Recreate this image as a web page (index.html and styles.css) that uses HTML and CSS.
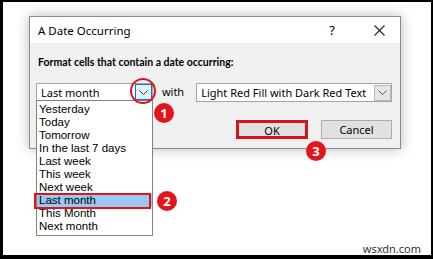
FILE: index.html
```html
<!DOCTYPE html>
<html lang="en">
<head>
    <meta charset="UTF-8">
    <title>A Date Occurring</title>
    <link rel="stylesheet" href="styles.css">
</head>
<body>
    <div class="frame">
        <div class="dialog">
            <div class="titlebar">
                <span class="title">A Date Occurring</span>
                <span class="help">?</span>
                <span class="close">
                    <svg width="11" height="11" viewBox="0 0 11 11"><path d="M0.5 0.5 L10.5 10.5 M10.5 0.5 L0.5 10.5" stroke="#222" stroke-width="1.1" fill="none"/></svg>
                </span>
            </div>
            <div class="body">
                <div class="label">Format cells that contain a date occurring:</div>
                <div class="row">
                    <div class="combo combo-period">
                        <span class="combo-text">Last month</span>
                        <span class="combo-btn active">
                            <svg width="9" height="5" viewBox="0 0 9 5"><path d="M0.5 0.5 L4.5 4.5 L8.5 0.5" stroke="#333" stroke-width="1" fill="none"/></svg>
                        </span>
                        <span class="ring"></span>
                        <span class="badge badge-1">1</span>
                        <ul class="list">
                            <li>Yesterday</li>
                            <li>Today</li>
                            <li>Tomorrow</li>
                            <li>In the last 7 days</li>
                            <li>Last week</li>
                            <li>This week</li>
                            <li>Next week</li>
                            <li class="selected">Last month<span class="badge badge-2">2</span></li>
                            <li>This Month</li>
                            <li>Next month</li>
                        </ul>
                    </div>
                    <span class="with">with</span>
                    <div class="combo combo-format">
                        <span class="combo-text">Light Red Fill with Dark Red Text</span>
                        <span class="combo-btn">
                            <svg width="9" height="5" viewBox="0 0 9 5"><path d="M0.5 0.5 L4.5 4.5 L8.5 0.5" stroke="#555" stroke-width="1" fill="none"/></svg>
                        </span>
                    </div>
                </div>
                <div class="buttons">
                    <button class="btn btn-ok">OK<span class="badge badge-3">3</span></button>
                    <button class="btn">Cancel</button>
                </div>
            </div>
        </div>
        <div class="watermark">wsxdn.com</div>
    </div>
</body>
</html>
```

FILE: styles.css
```css
* {
    margin: 0;
    padding: 0;
    box-sizing: border-box;
}
body {
    font-family: 'Noto Sans', 'Open Sans', sans-serif;
    background: #000;
}
.frame {
    position: relative;
    width: 433px;
    height: 259px;
    background: #fff;
    border-style: solid;
    border-color: #000;
    border-width: 2px 2px 4px 3px;
    overflow: hidden;
}
.dialog {
    margin: 14px 0 0 26px;
    width: 372px;
    height: 133px;
    border: 1px solid #8a8a8a;
    display: flex;
    flex-direction: column;
    box-shadow: 0 0 12px rgba(0, 0, 0, 0.28);
}
.titlebar {
    height: 26px;
    background: #fff;
    display: flex;
    align-items: center;
    padding-left: 8px;
    font-size: 11.5px;
    color: #000;
}
.title {
    flex: 1;
}
.help {
    font-size: 13px;
    margin-right: 39px;
}
.close {
    display: flex;
    margin-right: 15px;
}
.body {
    flex: 1;
    background: #f0f0f0;
    padding: 12px 8px 0 6px;
}
.label {
    font-family: 'Lato', 'Noto Sans', sans-serif;
    font-size: 10.5px;
    font-weight: bold;
    line-height: 14px;
    padding-left: 2px;
}
.row {
    display: flex;
    align-items: flex-start;
    margin-top: 14px;
}
.combo {
    position: relative;
    display: flex;
    align-items: center;
    background: #fff;
    border: 1px solid #a5a5a5;
    font-size: 11px;
}
.combo-period {
    width: 117px;
    height: 18px;
}
.combo-format {
    width: 196px;
    height: 19px;
    margin-left: 12px;
}
.combo-text {
    flex: 1;
    padding-left: 4px;
    white-space: nowrap;
}
.combo-btn {
    width: 17px;
    height: 16px;
    display: flex;
    align-items: center;
    justify-content: center;
    background: #e5e5e5;
    border: 1px solid #b9b9b9;
}
.combo-btn.active {
    background: #e5f1fb;
    border-color: #0078d7;
}
.with {
    font-size: 11px;
    margin-left: 9px;
    line-height: 18px;
}
.ring {
    position: absolute;
    left: 93px;
    top: -6px;
    width: 26px;
    height: 26px;
    border: 2.5px solid #e0141c;
    border-radius: 50%;
    z-index: 3;
}
.badge {
    position: absolute;
    width: 20px;
    height: 20px;
    border-radius: 50%;
    background: #e3141c;
    color: #fff;
    font-family: 'Noto Sans', sans-serif;
    font-size: 13px;
    font-weight: bold;
    line-height: 20px;
    display: flex;
    align-items: center;
    justify-content: center;
    z-index: 4;
}
.badge-1 {
    left: 117px;
    top: 19px;
}
.badge-2 {
    left: 120px;
    top: -3px;
}
.badge-3 {
    left: 67px;
    top: 18px;
}
.list {
    position: absolute;
    left: -1px;
    top: 16px;
    width: 117px;
    list-style: none;
    background: #fff;
    border: 1px solid #828282;
    padding: 2px 0;
    z-index: 2;
}
.list li {
    position: relative;
    font-family: 'Liberation Sans', Arial, sans-serif;
    font-size: 11.5px;
    line-height: 13px;
    padding-left: 2px;
}
.list li.selected {
    background: #99c9ef;
}
.list li.selected::before {
    content: '';
    position: absolute;
    left: -3px;
    right: 1px;
    top: -1px;
    bottom: -2px;
    border: 2.5px solid #e0141c;
}
.buttons {
    display: flex;
    justify-content: flex-end;
    gap: 13px;
    margin-top: 18px;
}
.btn {
    position: relative;
    width: 71px;
    height: 19px;
    background: #e1e1e1;
    border: 1px solid #adadad;
    font-family: inherit;
    font-size: 11px;
    color: #000;
}
.btn-ok {
    width: 72px;
    border: 3px solid #d7141c;
}
.watermark {
    position: absolute;
    right: 10px;
    bottom: 0;
    font-size: 11px;
    line-height: 13px;
    color: #333;
}
```
